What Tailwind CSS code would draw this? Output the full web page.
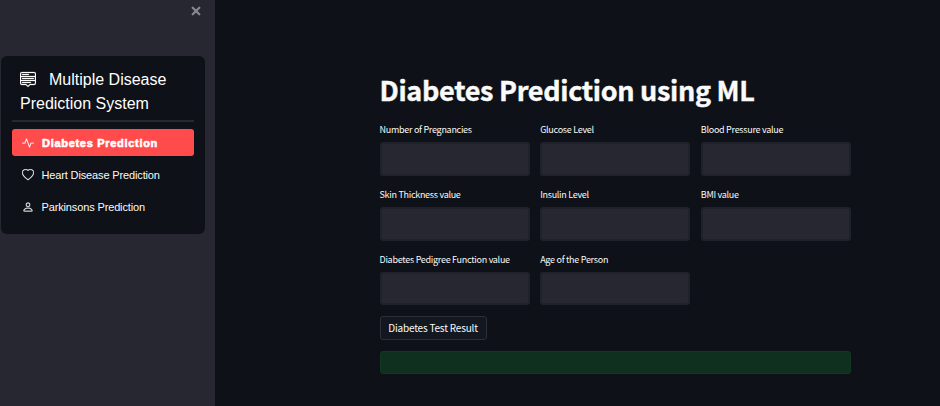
<!DOCTYPE html>
<html lang="en">
<head>
<meta charset="utf-8">
<title>Multiple Disease Prediction System</title>
<script src="https://cdn.jsdelivr.net/npm/@tailwindcss/browser@4"></script>
</head>
<body class="flex h-[406px] w-[940px] overflow-hidden bg-[#0e1117] text-[#fafafa] font-['Noto_Sans_CJK_SC',sans-serif]">
<aside class="flex h-full w-[215px] shrink-0 flex-col bg-[#262730] font-['Liberation_Sans',Arial,sans-serif]">
  <div class="flex h-[56px] justify-end pr-[14px] pt-[6px]">
    <svg class="size-[10px]" viewBox="0 0 10 10" fill="none" stroke="#85868b" stroke-width="2.3" stroke-linecap="round"><path d="M1.7 1.7 8.3 8.3M8.3 1.7 1.7 8.3"/></svg>
  </div>
  <nav class="ml-px h-[178px] w-[204px] rounded-[6px] bg-[#0e1117] px-[11px] pt-3">
    <h2 class="h-[52px] pl-2 text-[16px] leading-6 whitespace-nowrap text-white"><svg class="mr-[13px] inline-block size-4 align-[-2px]" viewBox="0 0 16 16" fill="currentColor" stroke="currentColor" stroke-width=".25"><path d="M7.646 15.854a.5.5 0 0 0 .708 0L10.207 14H14a2 2 0 0 0 2-2V3a2 2 0 0 0-2-2H2a2 2 0 0 0-2 2v9a2 2 0 0 0 2 2h3.793l1.853 1.854zM1 9V6h14v3H1zm14 1v2a1 1 0 0 1-1 1h-3.793a1 1 0 0 0-.707.293l-1.5 1.5-1.5-1.5A1 1 0 0 0 5.793 13H2a1 1 0 0 1-1-1v-2h14zm0-5H1V3a1 1 0 0 1 1-1h12a1 1 0 0 1 1 1v2zM2 11.5a.5.5 0 0 0 .5.5h8a.5.5 0 0 0 0-1h-8a.5.5 0 0 0-.5.5zm0-4a.5.5 0 0 0 .5.5h11a.5.5 0 0 0 0-1h-11a.5.5 0 0 0-.5.5zm0-4a.5.5 0 0 0 .5.5h6a.5.5 0 0 0 0-1h-6a.5.5 0 0 0-.5.5z"/></svg>Multiple Disease<br>Prediction System</h2>
    <hr class="h-[2px] border-0 bg-[#26292e]">
    <ul class="mt-[7px] flex flex-col gap-[5px] text-[11px] whitespace-nowrap">
      <li class="flex h-[27px] items-center gap-2 rounded-[3px] bg-[#ff4b4b] pl-[10px] pt-px font-black text-white">
        <svg class="size-3 shrink-0" viewBox="0 0 16 16" fill="currentColor" stroke="currentColor" stroke-width=".2"><path d="M6 2a.5.5 0 0 1 .47.33L10 12.036l1.53-4.208A.5.5 0 0 1 12 7.500h3.500a.5.5 0 0 1 0 1h-3.150l-1.880 5.170a.5.5 0 0 1-.94 0L6 3.964 4.470 8.171A.5.5 0 0 1 4 8.500H.5a.5.5 0 0 1 0-1h3.150l1.880-5.170A.5.5 0 0 1 6 2Z"/></svg>
        <span class="tracking-[0.7px] [-webkit-text-stroke:0.6px_white]">Diabetes Prediction</span>
      </li>
      <li class="flex h-[27px] items-center gap-[7.5px] pl-[10px] pt-px">
        <svg class="size-3 shrink-0" viewBox="0 0 16 16" fill="currentColor" stroke="currentColor" stroke-width=".3"><path d="m8 2.748-.717-.737C5.600.281 2.514.878 1.400 3.053c-.523 1.023-.641 2.500.314 4.385.92 1.815 2.834 3.989 6.286 6.357 3.452-2.368 5.365-4.542 6.286-6.357.955-1.886.838-3.362.314-4.385C13.486.878 10.400.280 8.717 2.010L8 2.748zM8 15C-7.333 4.868 3.279-3.040 7.824 1.143c.06.055.119.112.176.171a3.120 3.120 0 0 1 .176-.17C12.720-3.042 23.333 4.867 8 15z"/></svg>
        <span class="tracking-[-0.14px]">Heart Disease Prediction</span>
      </li>
      <li class="flex h-[27px] items-center gap-[7.5px] pl-[10px] pt-px">
        <svg class="size-3 shrink-0" viewBox="0 0 16 16" fill="currentColor" stroke="currentColor" stroke-width=".3"><path d="M8 8a3 3 0 1 0 0-6 3 3 0 0 0 0 6zm2-3a2 2 0 1 1-4 0 2 2 0 0 1 4 0zm4 8c0 1-1 1-1 1H3s-1 0-1-1 1-4 6-4 6 3 6 4zm-1-.004c-.001-.246-.154-.986-.832-1.664C11.516 10.680 10.289 10 8 10c-2.290 0-3.516.680-4.168 1.332-.678.678-.830 1.418-.832 1.664h10z"/></svg>
        <span class="tracking-[-0.14px]">Parkinsons Prediction</span>
      </li>
    </ul>
  </nav>
</aside>
<main class="w-[637px] pl-[164.5px] pt-[70px]">
  <h1 class="h-[52px] text-[27px] leading-[40px] font-bold tracking-[-0.31px] whitespace-nowrap [-webkit-text-stroke:0.4px_#fafafa]">Diabetes Prediction using ML</h1>
  <div class="grid w-[471.5px] grid-cols-3 gap-x-[10.5px] text-[9px] tracking-[-0.28px] whitespace-nowrap">
    <label class="h-[65px]"><span class="block h-5 leading-4">Number of Pregnancies</span><input class="block h-[34px] w-full rounded-[3px] border-2 border-[#20222b] bg-[#262730]"></label>
    <label class="h-[65px]"><span class="block h-5 leading-4">Glucose Level</span><input class="block h-[34px] w-full rounded-[3px] border-2 border-[#20222b] bg-[#262730]"></label>
    <label class="h-[65px]"><span class="block h-5 leading-4">Blood Pressure value</span><input class="block h-[34px] w-full rounded-[3px] border-2 border-[#20222b] bg-[#262730]"></label>
    <label class="h-[65px]"><span class="block h-5 leading-4">Skin Thickness value</span><input class="block h-[34px] w-full rounded-[3px] border-2 border-[#20222b] bg-[#262730]"></label>
    <label class="h-[65px]"><span class="block h-5 leading-4">Insulin Level</span><input class="block h-[34px] w-full rounded-[3px] border-2 border-[#20222b] bg-[#262730]"></label>
    <label class="h-[65px]"><span class="block h-5 leading-4">BMI value</span><input class="block h-[34px] w-full rounded-[3px] border-2 border-[#20222b] bg-[#262730]"></label>
    <label class="h-[64px]"><span class="block h-5 leading-4">Diabetes Pedigree Function value</span><input class="block h-[33px] w-full rounded-[3px] border-2 border-[#20222b] bg-[#262730]"></label>
    <label class="h-[64px]"><span class="block h-5 leading-4">Age of the Person</span><input class="block h-[33px] w-full rounded-[3px] border-2 border-[#20222b] bg-[#262730]"></label>
  </div>
  <button class="block h-[24px] w-[107px] rounded-[3px] border border-[#2d2f38] bg-[#131720] text-center text-[10px] leading-[22px] tracking-[-0.19px] whitespace-nowrap">Diabetes Test Result</button>
  <div class="mt-[11px] h-[23px] w-[471.5px] rounded-[3px] border border-[#12391f] bg-[#10301f]"></div>
</main>
</body>
</html>
